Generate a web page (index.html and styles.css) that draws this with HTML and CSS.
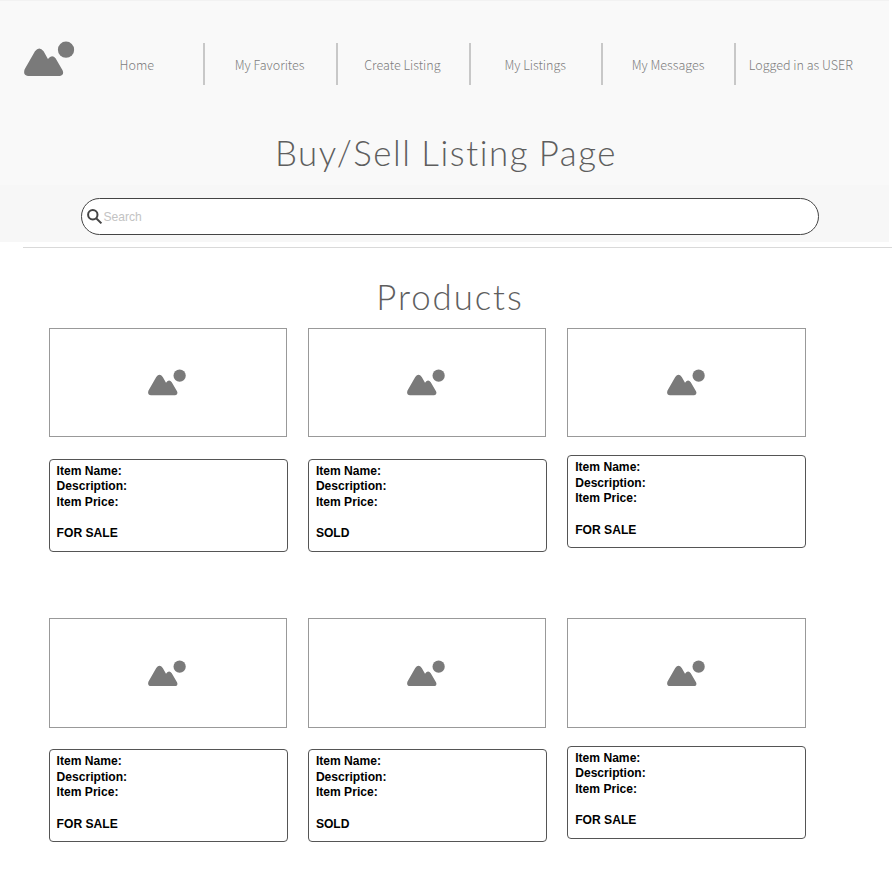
FILE: index.html
```html
<!DOCTYPE html>
<html lang="en">
<head>
<meta charset="utf-8">
<title>Buy/Sell Listing Page</title>
<link rel="stylesheet" href="styles.css">
</head>
<body>
<svg class="defs" aria-hidden="true">
  <symbol id="picture" viewBox="0 0 152 105">
    <circle cx="126.5" cy="26" r="24.5"/>
    <path d="M2 85 L33 31 Q46 14 59 31 L72 54 Q84 39 95 52 L116 88 Q122 102 108 105 H12 Q-4 103 2 85Z"/>
  </symbol>
</svg>
<header class="header">
  <div class="bar">
    <svg class="logo"><use href="#picture"/></svg>
    <nav class="nav">
      <a>Home</a><a>My Favorites</a><a>Create Listing</a><a>My Listings</a><a>My Messages</a><a>Logged in as USER</a>
    </nav>
  </div>
  <h1 class="title">Buy/Sell Listing Page</h1>
  <div class="search-band">
    <div class="search">
      <svg class="glass" viewBox="0 0 16 16"><circle cx="5.8" cy="5.8" r="4.7"/><path d="M9.2 9.2 L14.4 14.4"/></svg>
      <span>Search</span>
    </div>
  </div>
</header>
<main>
  <h2 class="subtitle">Products</h2>
  <section class="grid">
    <article><div class="photo"><svg><use href="#picture"/></svg></div><div class="info">Item Name:<br>Description:<br>Item Price:<br><br>FOR SALE</div></article>
    <article><div class="photo"><svg><use href="#picture"/></svg></div><div class="info">Item Name:<br>Description:<br>Item Price:<br><br>SOLD</div></article>
    <article class="tight"><div class="photo"><svg><use href="#picture"/></svg></div><div class="info">Item Name:<br>Description:<br>Item Price:<br><br>FOR SALE</div></article>
    <article><div class="photo"><svg><use href="#picture"/></svg></div><div class="info">Item Name:<br>Description:<br>Item Price:<br><br>FOR SALE</div></article>
    <article><div class="photo"><svg><use href="#picture"/></svg></div><div class="info">Item Name:<br>Description:<br>Item Price:<br><br>SOLD</div></article>
    <article class="tight"><div class="photo"><svg><use href="#picture"/></svg></div><div class="info">Item Name:<br>Description:<br>Item Price:<br><br>FOR SALE</div></article>
  </section>
</main>
</body>
</html>
```
FILE: styles.css
```css
* { box-sizing: border-box; }
html { overflow: hidden; }
body { margin: 0; background: #fff; font-family: "Liberation Sans", sans-serif; }
.defs { display: none; }
.header { width: 889px; height: 242px; background: #f9f9f9; border-top: 1px solid #f2f2f2; }
.bar { display: flex; height: 84px; padding: 40px 0 0 24px; }
.logo { width: 50.5px; height: 35px; fill: #7a7a7a; flex: none; }
.nav { display: flex; margin: 2px 0 0 -2.4px; height: 42px; }
.nav a {
  width: 132.8px; padding: 1px 1.4px 0 0; border-right: 2px solid #c8c8c8;
  text-align: center; line-height: 42px; white-space: nowrap; color: #7d7d7d;
  font-family: "Noto Sans CJK SC", sans-serif; font-size: 12.55px; font-weight: 300;
}
.nav a:last-child { border-color: transparent; }
.title, .subtitle {
  margin: 0; font-family: Lato, sans-serif; font-weight: 300; font-size: 34.8px;
  line-height: 44px; letter-spacing: 1.95px; color: #5e5e5e; text-align: center;
}
.title { margin-top: 46px; padding-left: 3px; height: 54px; letter-spacing: 1.57px; word-spacing: -1.3px; }
.search-band { height: 57px; padding: 13px 0 0 81px; background: #f7f7f7; }
.search {
  display: flex; align-items: center; width: 738px; height: 37px; padding-left: 5px;
  border: 1px solid #444; border-radius: 19px; background: #fff; font-size: 12.1px; color: #c3c3c3;
}
.glass { width: 16px; height: 16px; margin-right: 0.5px; fill: none; stroke: #444; stroke-width: 2; }
main { margin: 5px 0 0 23px; border-top: 1px solid #d9d9d9; }
.subtitle { width: 854px; margin-top: 27px; height: 52.5px; }
.grid {
  display: grid; grid-template-columns: repeat(3, 239px); column-gap: 20.3px;
  grid-auto-rows: 290.5px; margin-left: 25.6px;
}
.photo {
  display: flex; width: 238.5px; height: 109.5px; padding-left: 98.5px; padding-top: 40.6px;
  border: 1px solid #999;
}
.photo svg { width: 38px; height: 26.5px; fill: #7a7a7a; }
.info {
  width: 239px; height: 93px; margin-top: 21.5px; padding: 4px 0 0 7px;
  border: 1px solid #555; border-radius: 4px;
  font-size: 12.1px; font-weight: 700; line-height: 15.65px; color: #000;
}
.tight .info { margin-top: 18px; }
```
